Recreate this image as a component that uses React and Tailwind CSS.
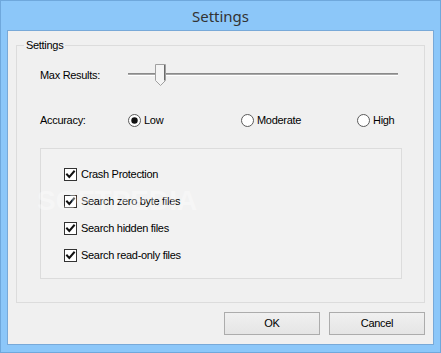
import React from "react";

const font = { fontFamily: '"Liberation Sans", Arial, sans-serif' };

function Radio({ checked }) {
  return (
    <svg width="13" height="13" viewBox="0 0 13 13" className="shrink-0">
      <circle cx="6.5" cy="6.5" r="6" fill="#ffffff" stroke="#5a5a5a" strokeWidth="1" />
      {checked && <circle cx="6.5" cy="6.5" r="3.2" fill="#111111" />}
    </svg>
  );
}

function Check() {
  return (
    <svg width="13" height="13" viewBox="0 0 13 13" className="shrink-0">
      <rect x="0.5" y="0.5" width="12" height="12" fill="#ffffff" stroke="#333333" />
      <path d="M3 6.5 L5.3 9 L10 3.5" fill="none" stroke="#111111" strokeWidth="2" strokeLinecap="square" />
    </svg>
  );
}

function Slider() {
  return (
    <div className="relative h-[22px] w-[270px]">
      <div className="absolute left-0 right-0 top-[9px] h-[1px] bg-[#8a8a8a]" />
      <div className="absolute left-0 right-0 top-[10px] h-[1px] bg-[#a8a8a8]" />
      <div className="absolute left-0 right-0 top-[11px] h-[1px] bg-[#ffffff]" />
      <svg width="11" height="22" viewBox="0 0 11 22" className="absolute left-[27px] top-0">
        <path d="M0.5 0.5 H10.5 V16.5 L5.5 21.5 L0.5 16.5 Z" fill="#f4f4f4" stroke="#a0a0a0" />
        <path d="M9.5 1 V16.5" stroke="#6a6a6a" />
      </svg>
    </div>
  );
}

export default function App() {
  return (
    <div
      className="w-[441px] h-[353px] bg-[#8cc7f9] flex flex-col border border-[#6fa8dc] relative overflow-hidden text-[#000] text-[11px] tracking-[-0.3px]"
      style={font}
    >
      <div
        className="h-[29px] flex items-center justify-center text-[15px] text-[#333333] tracking-normal pt-[1px]"
        style={{ fontFamily: '"Noto Sans", "Open Sans", sans-serif' }}
      >
        Settings
      </div>
      <div className="mx-[6px] h-[315px] border border-[#78a9d8] bg-[#f0f0f0] flex flex-col">
        <div className="relative mx-[8px] mt-[14px] h-[258px] border border-[#dcdcdc] flex flex-col">
          <div className="absolute left-[7px] top-[-8px] px-[2px] bg-[#f0f0f0] leading-[14px]">Settings</div>
          <div className="flex items-center mt-[18px] pl-[23px] h-[22px]">
            <div className="w-[88px]">Max Results:</div>
            <Slider />
          </div>
          <div className="flex items-center mt-[27px] pl-[23px] h-[14px]">
            <div className="w-[88px]">Accuracy:</div>
            <div className="w-[113px] flex items-center gap-[3px]">
              <Radio checked />
              <span>Low</span>
            </div>
            <div className="w-[116px] flex items-center gap-[3px]">
              <Radio />
              <span>Moderate</span>
            </div>
            <div className="flex items-center gap-[3px]">
              <Radio />
              <span>High</span>
            </div>
          </div>
          <div className="ml-[23px] mt-[21px] w-[362px] h-[131px] border border-[#dcdcdc] bg-[#f2f2f2] flex flex-col gap-[14px] pl-[23px] pt-[19px]">
            {["Crash Protection", "Search zero byte files", "Search hidden files", "Search read-only files"].map((t) => (
              <div key={t} className="flex items-center gap-[4px] h-[13px]">
                <Check />
                <span>{t}</span>
              </div>
            ))}
          </div>
        </div>
        <div className="flex justify-end gap-[9px] mr-[8px] mt-[9px]">
          <button className="w-[96px] h-[23px] border border-[#acacac] bg-gradient-to-b from-[#f0f0f0] to-[#e5e5e5] text-[11px]">
            OK
          </button>
          <button className="w-[96px] h-[23px] border border-[#acacac] bg-gradient-to-b from-[#f0f0f0] to-[#e5e5e5] text-[11px]">
            Cancel
          </button>
        </div>
      </div>
      <div
        className="absolute left-[36px] top-[185px] text-[28px] leading-[30px] font-bold text-white opacity-35 tracking-[0px] pointer-events-none"
        style={{ fontFamily: '"Liberation Sans", Arial, sans-serif' }}
      >
        SOFTPEDIA
      </div>
    </div>
  );
}
